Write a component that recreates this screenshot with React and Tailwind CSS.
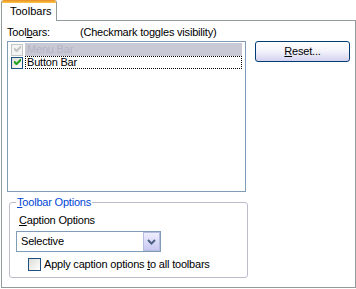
import React from "react";

function Check({ color }) {
  return (
    <svg width="7" height="7" viewBox="0 0 7 7" className="block">
      <path d="M0 2 L0 4 L2 6 L3 6 L7 2 L7 0 L6 0 L2.5 3.5 L1 2 Z" fill={color} />
    </svg>
  );
}

function ListCheck({ disabled }) {
  return (
    <div
      className={
        "w-[12px] h-[12px] border flex items-center justify-center " +
        (disabled
          ? "border-[#c4c4c4] bg-[#f4f4f4]"
          : "border-[#1c5180] bg-gradient-to-br from-[#dcdcd7] to-white")
      }
    >
      <Check color={disabled ? "#c4c4c4" : "#21a121"} />
    </div>
  );
}

export default function App() {
  return (
    <div
      className="w-[356px] h-[289px] bg-white text-[11px] leading-[13px] tracking-[-0.2px] text-black"
      style={{ fontFamily: '"Liberation Sans", Arial, sans-serif' }}
    >
      {/* Tab row */}
      <div className="flex h-[21px] pl-[1px]">
        <div className="relative z-10 w-[56px] h-[21px] bg-white border-l border-r border-[#919b9c] rounded-t-[3px] overflow-hidden">
          <div className="h-[3px] bg-gradient-to-b from-[#e68b2c] to-[#ffc83c]" />
          <div className="pl-[8px] pt-[2px] tracking-normal">Toolbars</div>
        </div>
      </div>

      {/* Panel */}
      <div className="ml-[1px] -mt-px w-[355px] h-[268px] border border-[#919b9c] bg-white">
        <div className="flex">
          {/* Left column */}
          <div className="ml-[5px] w-[239px]">
            <div className="flex pt-[5px] h-[18px]">
              <span className="w-[73px]">
                Tool<span className="underline">b</span>ars:
              </span>
              <span>(Checkmark toggles visibility)</span>
            </div>
            <div className="mt-[2px] h-[151px] border border-[#7f9db9] bg-white pt-px">
              <div className="flex items-center h-[13px]">
                <div className="ml-[3px]">
                  <ListCheck disabled />
                </div>
                <div className="ml-[2px] mr-[3px] flex-1 h-[13px] bg-[#c9c9d6] px-[2px] text-[#b4b4c4]">
                  Menu Bar
                </div>
              </div>
              <div className="flex items-center h-[13px]">
                <div className="ml-[3px]">
                  <ListCheck />
                </div>
                <div className="ml-[2px] mr-[3px] flex-1 h-[13px] border border-dotted border-black px-[1px] leading-[11px]">
                  Button Bar
                </div>
              </div>
            </div>
          </div>
          {/* Right column */}
          <div className="ml-[9px] mt-[20px]">
            <button className="w-[95px] h-[21px] border border-[#003c74] rounded-[3px] bg-gradient-to-b from-white via-[#f2f2fa] to-[#d4d2f0] flex items-center justify-center text-[11px] leading-[13px]">
              <span>
                <span className="underline">R</span>eset...
              </span>
            </button>
          </div>
        </div>

        {/* Group box */}
        <div className="relative ml-[7px] mt-[10px] w-[239px] h-[76px] border border-[#bdbccb] rounded-[3px] pl-[6px] pt-[11px]">
          <div className="absolute -top-[7px] left-[6px] bg-white px-[1px] text-[#0046d5]">
            <span className="underline">T</span>oolbar Options
          </div>
          <div className="ml-[3px] h-[13px]">
            <span className="underline">C</span>aption Options
          </div>
          <div className="mt-[4px] w-[145px] h-[21px] border border-[#7f9db9] bg-white flex items-center">
            <div className="flex-1 pl-[4px]">Selective</div>
            <div className="w-[17px] h-[19px] border border-[#b4bce0] bg-gradient-to-b from-[#eeeefe] to-[#c8c8f2] flex items-center justify-center">
              <svg width="9" height="6" viewBox="0 0 9 6" className="block">
                <path d="M1 1 L4.5 4.5 L8 1" stroke="#4d6185" strokeWidth="2" fill="none" />
              </svg>
            </div>
          </div>
          <div className="mt-[6px] ml-[12px] flex items-center h-[13px]">
            <div className="w-[13px] h-[13px] border border-[#1c5180] bg-gradient-to-br from-[#dcdcd7] to-white" />
            <span className="ml-[3px]">
              Apply caption options <span className="underline">t</span>o all toolbars
            </span>
          </div>
        </div>
      </div>
    </div>
  );
}
